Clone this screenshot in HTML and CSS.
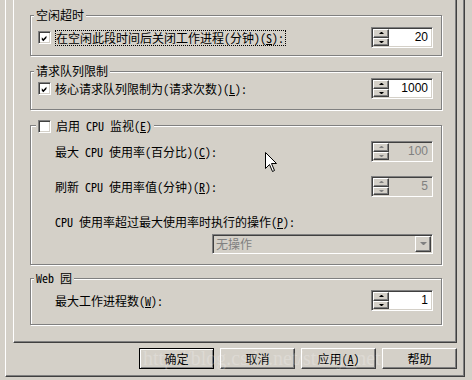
FILE: index.html
```html
<!DOCTYPE html>
<html lang="zh-CN">
<head>
<meta charset="utf-8">
<link rel="stylesheet" href="styles.css">
</head>
<body>
<div class="window">
  <div class="panel">
    <div class="group g1">
      <div class="title">空闲超时</div>
      <div class="row">
        <div class="check-line">
          <span class="cb"><svg viewBox="0 0 9 9" width="9" height="9"><polygon points="1,3 3,5 7,1 7,4 3,8 1,6" fill="#000"/></svg></span>
          <span class="label focus">在空闲此段时间后关闭工作进程(分钟)(<u>S</u>):</span>
        </div>
        <div class="spin"><div class="arrows"><span class="ab up"></span><span class="ab down"></span></div><div class="val">20</div></div>
      </div>
    </div>

    <div class="group g2">
      <div class="title">请求队列限制</div>
      <div class="row">
        <div class="check-line">
          <span class="cb"><svg viewBox="0 0 9 9" width="9" height="9"><polygon points="1,3 3,5 7,1 7,4 3,8 1,6" fill="#000"/></svg></span>
          <span class="label">核心请求队列限制为(请求次数)(<u>L</u>):</span>
        </div>
        <div class="spin"><div class="arrows"><span class="ab up"></span><span class="ab down"></span></div><div class="val">1000</div></div>
      </div>
    </div>

    <div class="group g3">
      <div class="title check-title"><span class="cb"></span><span class="label">启用 CPU 监视(<u>E</u>)</span></div>
      <div class="row">
        <span class="label">最大 CPU 使用率(百分比)(<u>C</u>):</span>
        <div class="spin disabled"><div class="arrows"><span class="ab up"></span><span class="ab down"></span></div><div class="val">100</div></div>
      </div>
      <div class="row r2">
        <span class="label">刷新 CPU 使用率值(分钟)(<u>R</u>):</span>
        <div class="spin disabled"><div class="arrows"><span class="ab up"></span><span class="ab down"></span></div><div class="val">5</div></div>
      </div>
      <div class="label r3">CPU 使用率超过最大使用率时执行的操作(<u>P</u>):</div>
      <div class="combo"><span class="ctext">无操作</span><span class="cbtn"></span></div>
    </div>

    <div class="group g4">
      <div class="title">Web 园</div>
      <div class="row">
        <span class="label">最大工作进程数(<u>W</u>):</span>
        <div class="spin"><div class="arrows"><span class="ab up"></span><span class="ab down"></span></div><div class="val">1</div></div>
      </div>
    </div>
  </div>

  <div class="buttons">
    <span class="btn default">确定</span>
    <span class="btn">取消</span>
    <span class="btn">应用(<u>A</u>)</span>
    <span class="btn">帮助</span>
  </div>
</div>

<div class="watermark">http://blog.csdn.net/study_net</div>

<svg class="cursor" width="13" height="21" viewBox="0 0 13 21"><path d="M0.5 0.5 L0.5 16.5 L4.5 12.5 L7.5 19.5 L9.5 18.5 L6.5 11.5 L11.5 11.5 Z" fill="#fff" stroke="#000" stroke-width="1"/></svg>
</body>
</html>
```

FILE: styles.css
```css
* { box-sizing: border-box; }

html, body {
  margin: 0;
  padding: 0;
}

body {
  width: 472px;
  height: 380px;
  overflow: hidden;
  background: #d4d0c8;
  position: relative;
  font-family: "Noto Sans Mono CJK SC", "Noto Sans CJK SC", sans-serif;
  font-size: 12px;
  line-height: 14px;
  color: #000;
}

.window {
  margin-left: 5px;
  width: 460px;
  height: 377px;
  background: #d4d0c8;
  border-left: 1px solid #fff;
  border-right: 1px solid #404040;
  border-bottom: 1px solid #404040;
  box-shadow: inset -1px -1px 0 #808080;
}

.panel {
  margin-left: 7px;
  width: 444px;
  height: 343px;
  border-left: 1px solid #fff;
  border-right: 1px solid #404040;
  border-bottom: 1px solid #404040;
  box-shadow: inset -1px -1px 0 #808080;
  padding: 15px 14px 0 16px;
}

.group {
  position: relative;
  border: 1px solid #808080;
  box-shadow: inset 1px 1px 0 #fff, 1px 1px 0 #fff;
  padding-right: 8px;
}

.title {
  position: absolute;
  top: -8px;
  left: 3px;
  padding: 0 2px;
  background: #d4d0c8;
  line-height: 14px;
  white-space: nowrap;
}

.check-title {
  left: 5px;
  top: -7px;
  display: flex;
  align-items: center;
  gap: 5px;
}

.g1 { padding-top: 11px; padding-bottom: 7px; padding-left: 7px; }
.g2 { margin-top: 15px; padding-top: 6px; padding-bottom: 10px; padding-left: 7px; }
.g3 { margin-top: 15px; padding-top: 15px; padding-bottom: 10px; padding-left: 24px; }
.g4 { margin-top: 13px; padding-top: 11px; padding-bottom: 13px; padding-left: 24px; }

.row {
  display: flex;
  justify-content: space-between;
  align-items: center;
  height: 21px;
}

.r2 { margin-top: 14px; }
.r3 { margin-top: 18px; display: block; }

.check-line {
  display: flex;
  align-items: center;
  gap: 4px;
}

.cb {
  width: 13px;
  height: 13px;
  padding: 2px;
  background: #fff;
  border-top: 1px solid #808080;
  border-left: 1px solid #808080;
  border-bottom: 1px solid #fff;
  border-right: 1px solid #fff;
  box-shadow: inset 1px 1px 0 #404040, inset -1px -1px 0 #d4d0c8;
  display: inline-flex;
  flex: none;
}

.cb svg { display: block; }

.label { white-space: nowrap; }

.focus {
  border: 1px dotted #000;
  padding: 0 1px 0 0;
}

.spin {
  width: 62px;
  height: 21px;
  display: flex;
  padding: 1px;
  background: #fff;
  border-top: 1px solid #808080;
  border-left: 1px solid #808080;
  border-bottom: 1px solid #fff;
  border-right: 1px solid #fff;
  box-shadow: inset 1px 1px 0 #404040, inset -1px -1px 0 #d4d0c8;
  flex: none;
}

.arrows {
  width: 16px;
  display: flex;
  flex-direction: column;
}

.ab {
  flex: 1;
  position: relative;
  background: #d4d0c8;
  border-top: 1px solid #fff;
  border-left: 1px solid #fff;
  border-right: 1px solid #404040;
  border-bottom: 1px solid #404040;
  box-shadow: inset -1px -1px 0 #808080;
}

.ab::after {
  content: "";
  position: absolute;
  left: 5px;
  top: 2px;
  width: 1px;
  border-left: 2px solid transparent;
  border-right: 2px solid transparent;
}

.up::after { border-bottom: 2px solid #000; }
.down::after { border-top: 2px solid #000; }

.val {
  flex: 1;
  text-align: right;
  padding-right: 3px;
  line-height: 17px;
  font-family: "Liberation Sans", sans-serif;
  font-size: 12px;
}

.disabled { background: #d4d0c8; }
.disabled .val { color: #808080; }
.disabled .up::after { border-bottom-color: #808080; }
.disabled .down::after { border-top-color: #808080; }

.combo {
  margin-top: 5px;
  margin-left: 157px;
  height: 20px;
  display: flex;
  padding: 1px;
  background: #d4d0c8;
  border-top: 1px solid #808080;
  border-left: 1px solid #808080;
  border-bottom: 1px solid #fff;
  border-right: 1px solid #fff;
  box-shadow: inset 1px 1px 0 #404040, inset -1px -1px 0 #d4d0c8;
}

.ctext {
  flex: 1;
  color: #808080;
  padding-left: 2px;
  line-height: 16px;
}

.cbtn {
  width: 16px;
  position: relative;
  background: #d4d0c8;
  border-top: 1px solid #fff;
  border-left: 1px solid #fff;
  border-right: 1px solid #404040;
  border-bottom: 1px solid #404040;
  box-shadow: inset -1px -1px 0 #808080;
}

.cbtn::after {
  content: "";
  position: absolute;
  left: 4px;
  top: 5px;
  width: 1px;
  border-left: 3px solid transparent;
  border-right: 3px solid transparent;
  border-top: 3px solid #808080;
}

.buttons {
  margin-left: 7px;
  margin-top: 5px;
  width: 444px;
  display: flex;
  justify-content: flex-end;
  gap: 6px;
}

.btn {
  width: 75px;
  height: 21px;
  display: flex;
  align-items: center;
  justify-content: center;
  background: #d4d0c8;
  border-top: 1px solid #fff;
  border-left: 1px solid #fff;
  border-right: 1px solid #404040;
  border-bottom: 1px solid #404040;
  box-shadow: inset -1px -1px 0 #808080;
}

.btn.default {
  border: 1px solid #000;
  box-shadow: inset 1px 1px 0 #fff, inset -1px -1px 0 #808080;
}

.watermark {
  position: absolute;
  left: 143px;
  top: 346px;
  font-family: "Liberation Serif", serif;
  font-size: 20px;
  line-height: 24px;
  color: rgba(255, 255, 255, 0.22);
  white-space: nowrap;
  pointer-events: none;
}

.cursor {
  position: absolute;
  left: 265px;
  top: 152px;
}
```
